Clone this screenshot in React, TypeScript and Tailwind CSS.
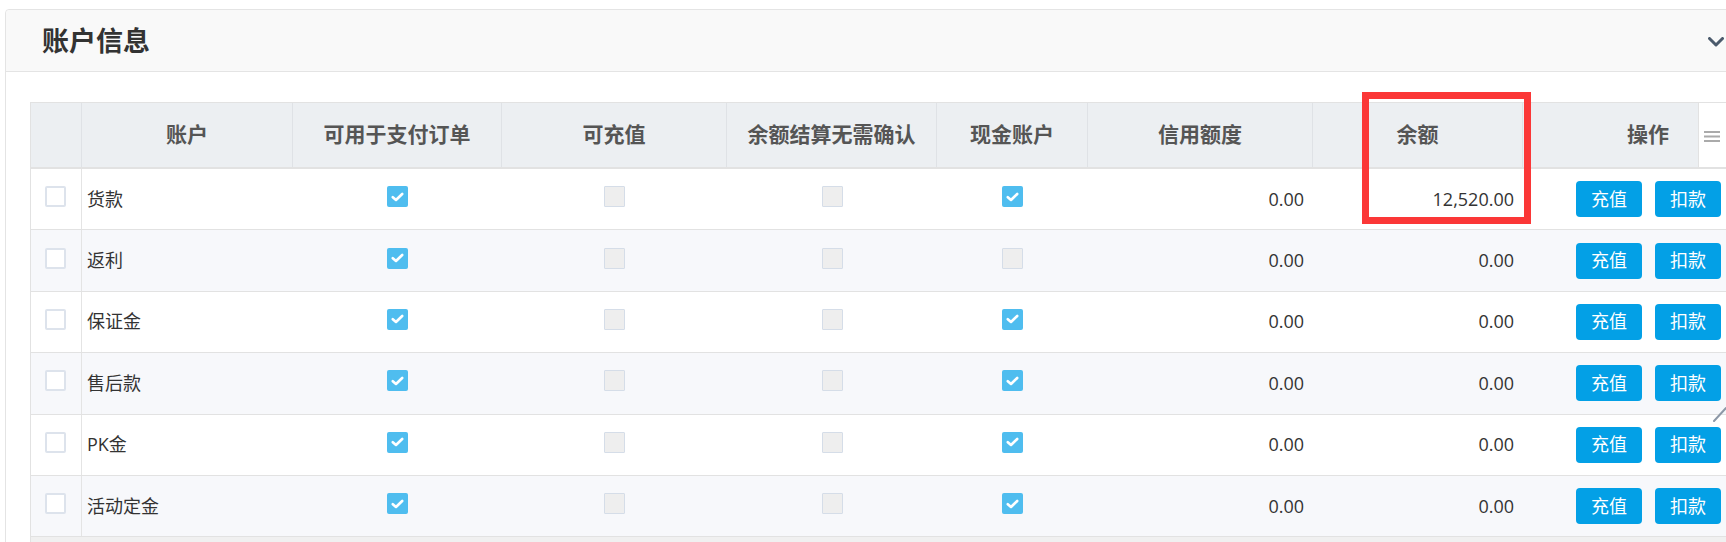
import React from "react";

type Row = { name: string; cash: boolean; balance: string };

const rows: Row[] = [
  { name: "货款", cash: true, balance: "12,520.00" },
  { name: "返利", cash: false, balance: "0.00" },
  { name: "保证金", cash: true, balance: "0.00" },
  { name: "售后款", cash: true, balance: "0.00" },
  { name: "PK金", cash: true, balance: "0.00" },
  { name: "活动定金", cash: true, balance: "0.00" },
];

function Checked() {
  return (
    <span className="flex h-[21px] w-[21px] items-center justify-center rounded-[2px] bg-[#4fbdef]">
      <svg width="13" height="10" viewBox="0 0 13 10" fill="none">
        <path d="M1.8 5.2 L5 8 L11.2 2" stroke="#ffffff" strokeWidth="2.6" strokeLinecap="round" strokeLinejoin="round" />
      </svg>
    </span>
  );
}

function Disabled() {
  return <span className="block h-[21px] w-[21px] rounded-[1px] border border-[#d5dde8] bg-[#eeeeee]" />;
}

function Empty() {
  return <span className="block h-[21px] w-[21px] rounded-[2px] border-2 border-[#dde3ec] bg-white" />;
}

export default function App() {
  return (
    <div className="relative h-[542px] w-[1726px] overflow-hidden bg-white font-['Open_Sans','Noto_Sans_CJK_SC',sans-serif] text-[#333]">
      <div className="ml-[5px] mt-[9px] w-[1800px] rounded-[4px] border border-[#e4e4e4] bg-white">
        {/* panel header */}
        <div className="flex h-[62px] items-center rounded-t-[4px] border-b border-[#e4e4e4] bg-[#f9f9f9] pl-[36px]">
          <h2 className="text-[27px] font-bold leading-none text-[#333]">账户信息</h2>
          <div className="ml-[1558px] pt-[2px]">
            <svg width="16" height="10" viewBox="0 0 16 10" fill="none">
              <path d="M1.5 1.5 L8 8 L14.5 1.5" stroke="#4b5a6c" strokeWidth="3" strokeLinecap="round" strokeLinejoin="round" />
            </svg>
          </div>
        </div>

        {/* panel body */}
        <div className="pl-[24px] pt-[30px]">
          <div className="border-l border-t border-[#e2e2e2]">
            {/* table header */}
            <div className="flex h-[66px] border-b-2 border-[#e2e2e2] bg-[#eceff2] text-[21px] font-bold text-[#555]">
              <div className="w-[51px] shrink-0 border-r border-[#dfe2e6]" />
              <div className="flex w-[211px] shrink-0 items-center justify-center border-r border-[#dfe2e6]">账户</div>
              <div className="flex w-[209px] shrink-0 items-center justify-center border-r border-[#dfe2e6]">可用于支付订单</div>
              <div className="flex w-[225px] shrink-0 items-center justify-center border-r border-[#dfe2e6]">可充值</div>
              <div className="flex w-[210px] shrink-0 items-center justify-center border-r border-[#dfe2e6]">余额结算无需确认</div>
              <div className="flex w-[151px] shrink-0 items-center justify-center border-r border-[#dfe2e6]">现金账户</div>
              <div className="flex w-[225px] shrink-0 items-center justify-center border-r border-[#dfe2e6]">信用额度</div>
              <div className="flex w-[210px] shrink-0 items-center justify-center border-r border-[#dfe2e6]">余额</div>
              <div className="flex w-[175px] shrink-0 items-center justify-end pr-[29px]">操作</div>
              <div className="flex w-[60px] shrink-0 items-start border-l border-[#e2e2e2] bg-white pl-[5px] pt-[28px]">
                <svg width="16" height="11" viewBox="0 0 16 11" fill="none">
                  <path d="M0 1 H16 M0 5.5 H16 M0 10 H16" stroke="#aaaaaa" strokeWidth="1.8" />
                </svg>
              </div>
            </div>

            {/* body rows */}
            {rows.map((r, i) => (
              <div
                key={r.name}
                className={`flex h-[61.4px] items-center border-b border-[#e2e2e2] text-[18px] ${i % 2 === 1 ? "bg-[#f7f8fb]" : "bg-white"}`}
              >
                <div className="flex h-full w-[51px] shrink-0 items-center justify-center border-r border-[#e4e4e4] pb-[5px] pr-[1px]">
                  <Empty />
                </div>
                <div className="w-[211px] shrink-0 pl-[5px]">{r.name}</div>
                <div className="flex w-[209px] shrink-0 justify-center pb-[5px]">
                  <Checked />
                </div>
                <div className="flex w-[225px] shrink-0 justify-center pb-[5px]">
                  <Disabled />
                </div>
                <div className="flex w-[210px] shrink-0 justify-center pb-[5px]">
                  <Disabled />
                </div>
                <div className="flex w-[151px] shrink-0 justify-center pb-[5px]">
                  {r.cash ? <Checked /> : <Disabled />}
                </div>
                <div className="w-[225px] shrink-0 pr-[9px] text-right">0.00</div>
                <div className="w-[210px] shrink-0 pr-[9px] text-right">{r.balance}</div>
                <div className="flex w-[300px] shrink-0 gap-[13px] pl-[53px]">
                  <button className="h-[36px] w-[66px] rounded-[4px] bg-[#03a0e6] text-[18px] text-white">充值</button>
                  <button className="h-[36px] w-[66px] rounded-[4px] bg-[#03a0e6] text-[18px] text-white">扣款</button>
                </div>
              </div>
            ))}
            <div className="h-[12px] bg-[#f0f0f0]" />
          </div>
        </div>
      </div>

      {/* red annotation box */}
      <div className="absolute left-[1362px] top-[92px] h-[132px] w-[169px] border-[7px] border-[#fb3737]" />

      {/* small diagonal handle */}
      <svg className="absolute left-[1713px] top-[406px]" width="14" height="16" viewBox="0 0 14 16" fill="none">
        <path d="M1 15 L13 2" stroke="#8d98a7" strokeWidth="2" strokeLinecap="round" />
      </svg>
    </div>
  );
}
